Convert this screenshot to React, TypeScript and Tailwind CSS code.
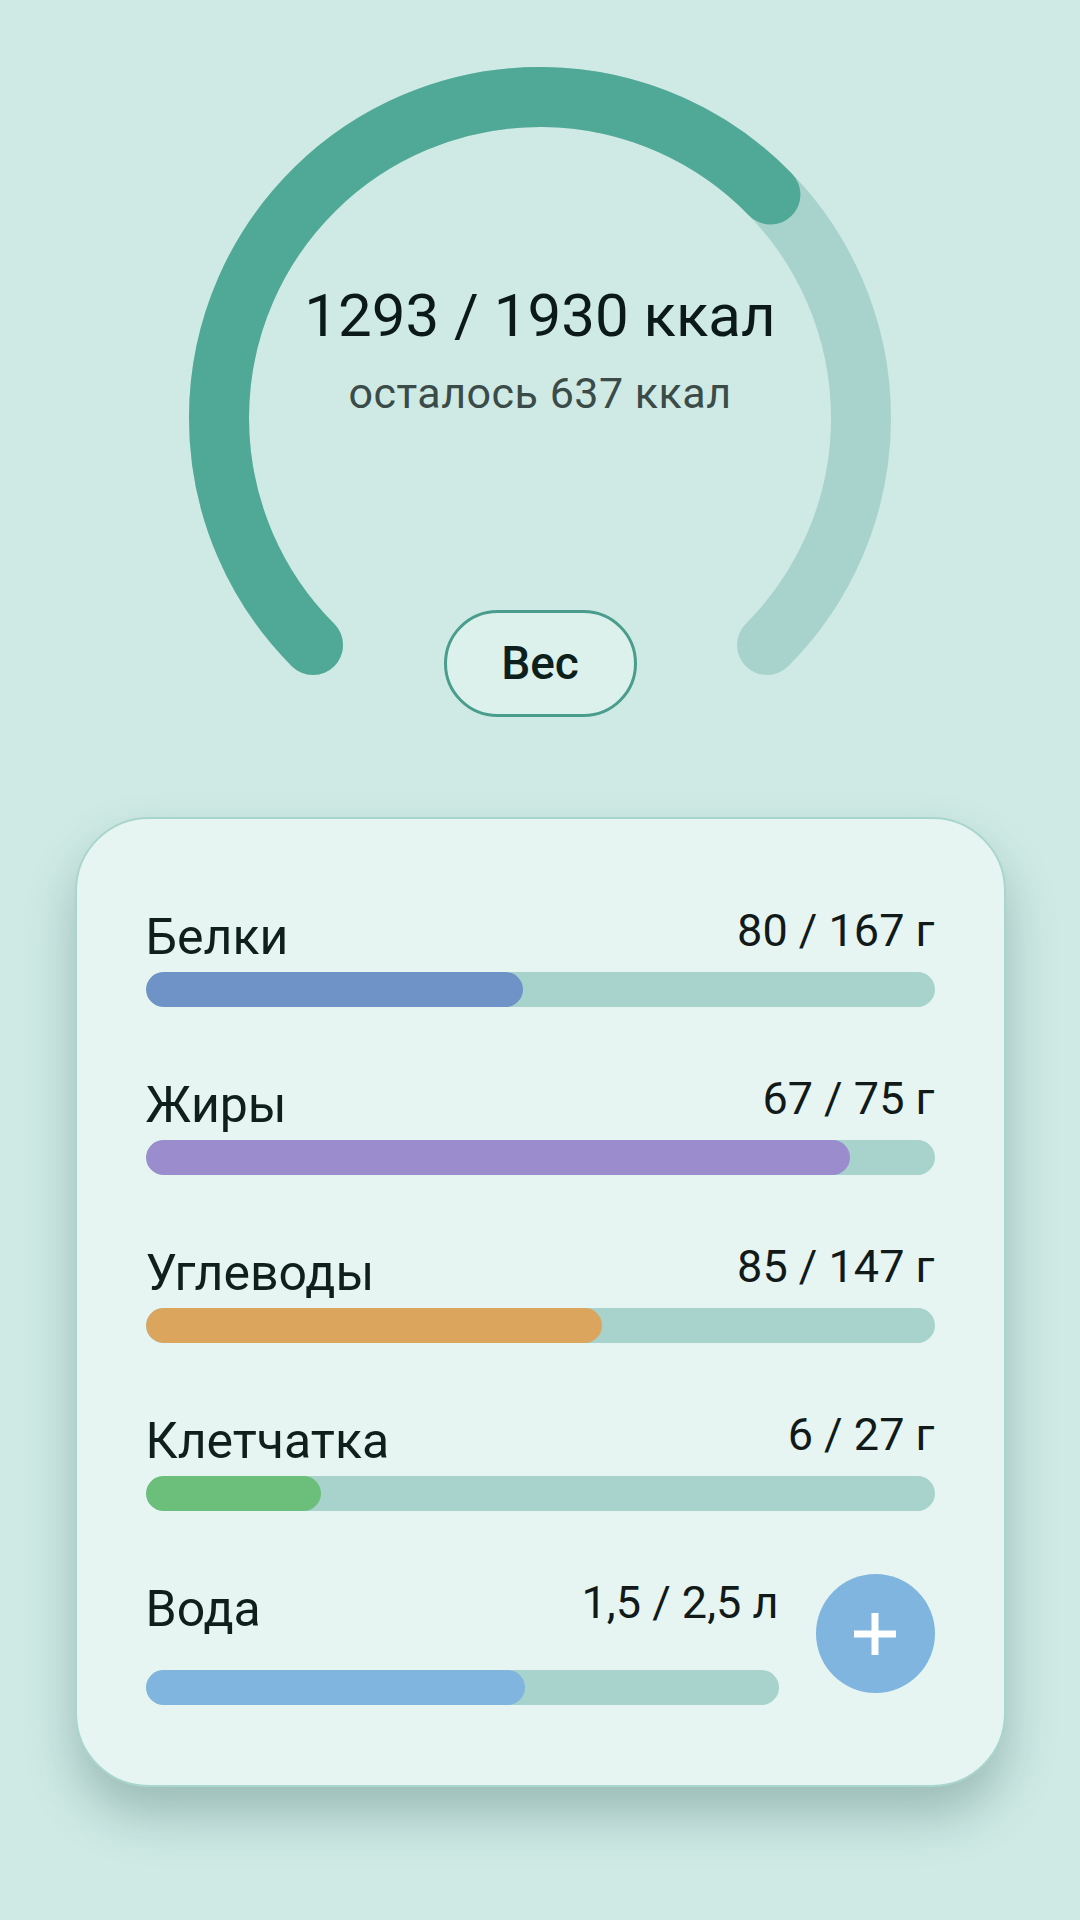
import React from 'react';

const R = 321;
const C = 360;

function pt(deg: number) {
  const a = (deg * Math.PI) / 180;
  return [C + R * Math.cos(a), C + R * Math.sin(a)];
}

function arcPath(from: number, to: number) {
  const [x1, y1] = pt(from);
  const [x2, y2] = pt(to);
  const large = to - from > 180 ? 1 : 0;
  return `M ${x1} ${y1} A ${R} ${R} 0 ${large} 1 ${x2} ${y2}`;
}

const eaten = 1293;
const goal = 1930;

const macros = [
  { name: 'Белки', value: '80 / 167 г', pct: 80 / 167, color: 'bg-[#7093c7]' },
  { name: 'Жиры', value: '67 / 75 г', pct: 67 / 75, color: 'bg-[#9b8cce]' },
  { name: 'Углеводы', value: '85 / 147 г', pct: 85 / 147, color: 'bg-[#dba55e]' },
  { name: 'Клетчатка', value: '6 / 27 г', pct: 6 / 27, color: 'bg-[#6cbf7b]' },
];

function Bar({ pct, color }: { pct: number; color: string }) {
  return (
    <div className="h-[35px] w-full rounded-full bg-[#a8d3cc] overflow-hidden">
      <div className={`h-full rounded-full ${color}`} style={{ width: `${pct * 100}%` }} />
    </div>
  );
}

function Header({ name, value }: { name: string; value: string }) {
  return (
    <div className="flex items-start justify-between">
      <span className="text-[50px] leading-none text-[#0f1f1c]">{name}</span>
      <span className="-mt-1 text-[45px] leading-none text-[#111a18]">{value}</span>
    </div>
  );
}

export default function App() {
  const progressEnd = 135 + 270 * (eaten / goal);

  return (
    <div
      className="min-h-[1920px] w-full bg-[#cfeae5] flex flex-col items-center"
      style={{ fontFamily: 'Roboto, "Noto Sans", sans-serif' }}
    >
      {/* Calorie gauge */}
      <div className="relative mt-[58px] w-[720px] h-[720px] flex flex-col items-center">
        <svg className="absolute inset-0" width="720" height="720" viewBox="0 0 720 720">
          <path d={arcPath(135, 405)} fill="none" stroke="#a8d3cc" strokeWidth="60" strokeLinecap="round" />
          <path d={arcPath(135, progressEnd)} fill="none" stroke="#50a996" strokeWidth="60" strokeLinecap="round" />
        </svg>
        <div className="relative pt-[222px] text-[60px] leading-[72px] text-[#0b1a17]">
          {eaten} / {goal} ккал
        </div>
        <div className="relative mt-[16px] text-[43px] leading-[50px] tracking-[0.5px] text-[#3b4b48]">
          осталось {goal - eaten} ккал
        </div>
        <button className="relative mt-[192px] w-[193px] h-[107px] rounded-full border-[3px] border-[#4a9d8c] bg-[#dcf0ec] text-[46px] font-medium text-[#0d1f1c]">
          Вес
        </button>
      </div>

      {/* Macros card */}
      <div className="mt-[39px] w-[931px] h-[970px] rounded-[74px] border-2 border-[#a9d6cc] bg-[#e6f5f2] shadow-[0_28px_50px_rgba(20,70,60,0.28)] px-[69px] pt-[93px] flex flex-col gap-[73px]">
        {macros.map((m) => (
          <div key={m.name} className="flex flex-col gap-[10px]">
            <Header name={m.name} value={m.value} />
            <Bar pct={m.pct} color={m.color} />
          </div>
        ))}

        <div className="flex items-start gap-[37px]">
          <div className="flex-1 flex flex-col gap-[36px]">
            <Header name="Вода" value="1,5 / 2,5 л" />
            <Bar pct={1.5 / 2.5} color="bg-[#7fb5de]" />
          </div>
          <button className="-mt-[10px] w-[119px] h-[119px] rounded-full bg-[#7fb5de] flex items-center justify-center">
            <svg width="42" height="42" viewBox="0 0 42 42">
              <path d="M21 0 V42 M0 21 H42" stroke="#ffffff" strokeWidth="7" />
            </svg>
          </button>
        </div>
      </div>
    </div>
  );
}
